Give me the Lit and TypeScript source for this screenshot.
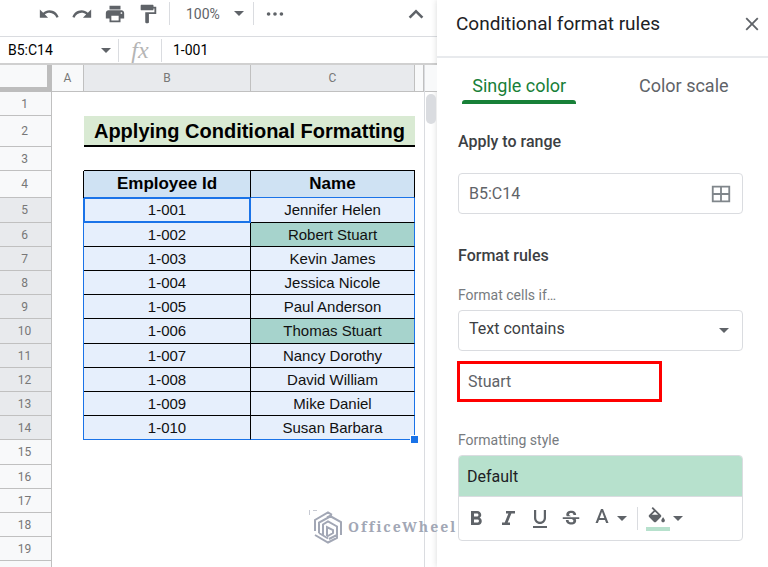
import { LitElement, html, css, svg } from "lit";
import { customElement, state } from "lit/decorators.js";
import { classMap } from "lit/directives/class-map.js";

const icon = (d: string, size = 24) => html`<svg class="icon" width=${size} height=${size} viewBox="0 0 24 24" aria-hidden="true">${svg`<path d=${d} />`}</svg>`;
const caret = html`<svg class="icon" width="10" height="5" viewBox="0 0 10 5" aria-hidden="true"><path d="M0 0h10L5 5z" /></svg>`;

const ICONS = {
  undo: "M12.5 8c-2.65 0-5.05.99-6.9 2.6L2 7v9h9l-3.62-3.62c1.39-1.16 3.16-1.88 5.12-1.88 3.54 0 6.55 2.31 7.6 5.5l2.37-.78C21.08 11.03 17.15 8 12.5 8z",
  redo: "M18.4 10.6C16.55 8.99 14.15 8 11.5 8c-4.65 0-8.58 3.03-9.96 7.22L3.9 16c1.05-3.19 4.05-5.5 7.6-5.5 1.95 0 3.73.72 5.12 1.88L13 16h9V7l-3.6 3.6z",
  print: "M19 8H5c-1.66 0-3 1.34-3 3v6h4v4h12v-4h4v-6c0-1.66-1.34-3-3-3zm-3 11H8v-5h8v5zm3-7c-.55 0-1-.45-1-1s.45-1 1-1 1 .45 1 1-.45 1-1 1zm-1-9H6v4h12V3z",
  paint: "M18 4V3c0-.55-.45-1-1-1H5c-.55 0-1 .45-1 1v4c0 .55.45 1 1 1h12c.55 0 1-.45 1-1V6h1v4H9v11c0 .55.45 1 1 1h2c.55 0 1-.45 1-1v-9h8V4h-3z",
  more: "M5 10a2 2 0 1 0 0 4 2 2 0 0 0 0-4zm7 0a2 2 0 1 0 0 4 2 2 0 0 0 0-4zm7 0a2 2 0 1 0 0 4 2 2 0 0 0 0-4z",
  up: "M12 7l-8 8 2 2 6-6 6 6 2-2z",
  close: "M19 6.4L17.6 5 12 10.6 6.4 5 5 6.4 10.6 12 5 17.6 6.4 19 12 13.4 17.6 19 19 17.6 13.4 12z",
  grid: "M2 3v18h20V3H2zm9 16H4v-6h7v6zm0-8H4V5h7v6zm9 8h-7v-6h7v6zm0-8h-7V5h7v6z",
  bold: "M15.6 10.79c.97-.67 1.65-1.77 1.65-2.79 0-2.26-1.75-4-4-4H7v14h7.04c2.09 0 3.71-1.7 3.71-3.79 0-1.52-.86-2.82-2.15-3.42zM10 6.5h3c.83 0 1.5.67 1.5 1.5s-.67 1.5-1.5 1.5h-3v-3zm3.5 9H10v-3h3.5c.83 0 1.5.67 1.5 1.5s-.67 1.5-1.5 1.5z",
  italic: "M10 4v2.500h2.400L8.700 15.500H6V18h8v-2.500h-2.300L15.400 6.500H19V4z",
  underline: "M12 17c3.31 0 6-2.69 6-6V3h-2.200v8c0 2.100-1.700 3.800-3.800 3.800S8.200 13.100 8.200 11V3H6v8c0 3.310 2.690 6 6 6zm-7 2v2h14v-2H5z",
  strike: "M7.24 8.75c-.26-.48-.39-1.03-.39-1.67 0-.61.13-1.16.4-1.67.26-.5.63-.93 1.11-1.29.48-.35 1.05-.63 1.7-.83.66-.19 1.39-.29 2.18-.29.81 0 1.54.11 2.21.34.66.22 1.23.54 1.69.94.47.4.83.88 1.08 1.43.25.55.38 1.15.38 1.81h-3.01c0-.31-.05-.59-.15-.85-.09-.27-.24-.49-.44-.68-.2-.19-.45-.33-.75-.44-.3-.1-.66-.16-1.06-.16-.39 0-.74.04-1.03.13-.29.09-.53.21-.72.36-.19.16-.34.34-.44.55-.1.21-.15.43-.15.66 0 .48.25.88.74 1.21.38.25.77.48 1.41.7H7.39c-.05-.08-.11-.17-.15-.25zM21 12v-2H3v2h9.62c.18.07.4.14.55.2.37.17.66.34.87.51.21.17.35.36.43.57.07.2.11.43.11.69 0 .23-.05.45-.14.66-.09.2-.23.38-.42.53-.19.15-.42.26-.71.35-.29.08-.63.13-1.01.13-.43 0-.83-.04-1.18-.13s-.66-.23-.91-.42c-.25-.19-.45-.44-.59-.75-.14-.31-.25-.76-.25-1.21H6.4c0 .55.08 1.13.24 1.58.16.45.37.85.65 1.21.28.35.6.66.98.92.37.26.78.48 1.22.65.44.17.9.3 1.38.39.48.08.96.13 1.44.13.8 0 1.53-.09 2.18-.28s1.21-.45 1.67-.79c.46-.34.82-.77 1.07-1.27s.38-1.07.38-1.71c0-.6-.1-1.14-.31-1.61-.05-.11-.11-.23-.17-.33H21z",
  color: "M11 2L5.500 16h2.400l1.100-3h6l1.100 3h2.400L13 2h-2zm-1.300 9L12 4.700 14.300 11H9.700z",
};

const PEOPLE = [
  ["1-001", "Jennifer Helen"],
  ["1-002", "Robert Stuart"],
  ["1-003", "Kevin James"],
  ["1-004", "Jessica Nicole"],
  ["1-005", "Paul Anderson"],
  ["1-006", "Thomas Stuart"],
  ["1-007", "Nancy Dorothy"],
  ["1-008", "David William"],
  ["1-009", "Mike Daniel"],
  ["1-010", "Susan Barbara"],
];

@customElement("sheet-grid")
class SheetGrid extends LitElement {
  static properties = { match: { type: String } };
  declare match: string;

  static styles = css`
    :host { display: flex; flex: 1; min-height: 0; overflow: hidden; position: relative; }
    .sheet { flex: 1; min-width: 0; display: flex; flex-direction: column; }
    .gutter { flex: 1; width: 52px; box-sizing: border-box; background: #f8f9fa; border-right: 1px solid #c0c0c0; }
    table { width: 100%; table-layout: fixed; border-collapse: separate; border-spacing: 0; font-family: "Liberation Sans", Arial, sans-serif; color: #000; }
    .c-num { width: 52px; }
    .c-a { width: 32px; }
    .c-b { width: 167px; }
    .c-c { width: 164px; }
    th, td { box-sizing: border-box; padding: 0; text-align: center; vertical-align: middle; white-space: nowrap; line-height: 20px; }
    thead th { height: 27px; background: #f8f9fa; border-right: 1px solid #c0c0c0; border-bottom: 1px solid #c0c0c0; color: #777; font: 400 12px/20px Roboto, sans-serif; }
    thead .corner { border-right: 5px solid #bdbdbd; border-bottom: 5px solid #bdbdbd; }
    .num { background: #f8f9fa; border-right: 1px solid #c0c0c0; border-bottom: 1px solid #c0c0c0; color: #777; font: 400 12px/20px Roboto, sans-serif; padding-right: 2px; }
    thead .picked, .num.picked { background: #e8eaed; }
    tbody tr { height: 24px; }
    tbody tr:nth-child(5n) { height: 25px; }
    tbody .title-row { height: 31px; }
    tbody .head-row { height: 27px; }
    .title { background: #d9ead3; border-bottom: 2px solid #000; font-size: 20px; font-weight: 700; }
    .rule-above { border-bottom: 1px solid #000; }
    .edge { border-right: 1px solid #000; }
    .head { background: #cfe2f3; border-right: 1px solid #000; border-bottom: 1px solid #1a73e8; font-size: 17px; font-weight: 700; }
    .edge-sel { border-right: 1px solid #1a73e8; }
    .cell { background: #e6effc; border-right: 1px solid #000; border-bottom: 1px solid #000; font-size: 15px; color: #111; }
    .last { border-right-color: #1a73e8; }
    .bottom { border-bottom-color: #1a73e8; }
    .hit { background: #a6d3cc; }
    .active { border-color: #1a73e8; box-shadow: inset 0 0 0 1px #1a73e8; }
    .anchor { position: relative; }
    .handle { position: absolute; right: -4px; bottom: -4px; width: 7px; height: 7px; background: #1a73e8; outline: 1px solid #fff; }
    .scroll { width: 13px; box-sizing: border-box; border-left: 1px solid #dadce0; }
    .scroll-head { height: 26px; background: #f8f9fa; border-bottom: 1px solid #c0c0c0; }
    .thumb { height: 30px; margin: 2px 1px; border-radius: 5px; background: #dadce0; }
  `;

  private row(n: number) {
    const picked = n >= 5 && n <= 14;
    const num = html`<th scope="row" class=${classMap({ num: true, picked })}>${n}</th>`;
    if (n === 2) return html`<tr class="title-row">${num}<td></td><td class="title" colspan="2">Applying Conditional Formatting</td><td></td></tr>`;
    if (n === 3) return html`<tr>${num}<td></td><td class="rule-above"></td><td class="rule-above"></td><td></td></tr>`;
    if (n === 4) return html`<tr class="head-row">${num}<td class="edge"></td><td class="head">Employee Id</td><td class="head">Name</td><td></td></tr>`;
    if (!picked) return html`<tr>${num}<td></td><td></td><td></td><td></td></tr>`;
    const [id, name] = PEOPLE[n - 5];
    const bottom = n === 14;
    return html`<tr>
      ${num}
      <td class="edge-sel"></td>
      <td class=${classMap({ cell: true, bottom, active: n === 5 })}>${id}</td>
      <td class=${classMap({ cell: true, last: true, bottom, anchor: bottom, hit: name.includes(this.match) })}>
        ${name}${bottom ? html`<span class="handle"></span>` : null}
      </td>
      <td></td>
    </tr>`;
  }

  render() {
    return html`
      <div class="sheet">
        <table>
          <colgroup><col class="c-num" /><col class="c-a" /><col class="c-b" /><col class="c-c" /><col /></colgroup>
          <thead>
            <tr><th class="corner"></th><th>A</th><th class="picked">B</th><th class="picked">C</th><th></th></tr>
          </thead>
          <tbody>${Array.from({ length: 19 }, (_, i) => this.row(i + 1))}</tbody>
        </table>
        <div class="gutter"></div>
      </div>
      <div class="scroll"><div class="scroll-head"></div><div class="thumb"></div></div>
    `;
  }
}

@customElement("rules-panel")
class RulesPanel extends LitElement {
  static properties = { match: { type: String } };
  declare match: string;

  static styles = css`
    :host { display: block; width: 331px; flex: none; box-sizing: border-box; background: #fff; font-family: Roboto, sans-serif; color: #3c4043; box-shadow: 0 0 6px rgba(60, 64, 67, 0.2); }
    button, input, select { font: inherit; color: inherit; margin: 0; }
    button { display: flex; align-items: center; justify-content: center; padding: 0; border: 0; background: none; color: #5f6368; }
    .icon { display: block; fill: currentColor; }
    header { display: flex; align-items: center; justify-content: space-between; height: 58px; padding: 0 5px 8px 19px; box-sizing: border-box; border-bottom: 2px solid #e8eaed; }
    h2 { margin: 0; font-size: 19px; line-height: 24px; font-weight: 400; color: #202124; }
    .tabs { display: grid; grid-template-columns: 1fr 1fr; padding-top: 16px; padding-right: 2px; justify-items: center; }
    .tab { flex-direction: column; font-size: 18px; line-height: 24px; }
    .tab::after { content: ""; width: 114px; height: 4px; margin-top: 2px; border-radius: 3px 3px 0 0; }
    .tab.on { color: #188038; }
    .tab.on::after { background: #188038; }
    .body { display: flex; flex-direction: column; padding: 26px 25px 24px 21px; }
    h3 { margin: 0; font-size: 16px; line-height: 24px; font-weight: 500; }
    .small { font-size: 14px; line-height: 20px; color: #777b80; }
    .box { display: flex; align-items: center; height: 41px; box-sizing: border-box; border: 1px solid #dadce0; border-radius: 4px; padding: 0 10px; font-size: 16px; }
    .box input { flex: 1; min-width: 0; border: 0; outline: 0; padding: 0; background: none; }
    .box .icon { color: #80868b; }
    .box.range { margin: 19px 0 30px; color: #5f6368; }
    .fmt { margin-top: 17px; }
    .pick { position: relative; margin-top: 5px; }
    .pick select { display: block; width: 100%; padding: 0 10px 4px; height: 41px; border: 1px solid #dadce0; border-radius: 4px; background: none; appearance: none; font-size: 16px; box-sizing: border-box; }
    .pick .icon { position: absolute; right: 14px; top: 18px; pointer-events: none; color: #5f6368; }
    .term { width: 203px; height: 39px; box-sizing: border-box; margin-top: 11px; padding: 0 8px; border: 2px solid #f00; outline: 1px solid #f00; font-size: 16px; color: #5f6368; background: none; }
    .style-label { margin-top: 29px; }
    .style { margin-top: 5px; border: 1px solid #dadce0; border-radius: 4px; overflow: hidden; background: #fff; }
    .preview { width: 100%; height: 41px; justify-content: flex-start; padding: 0 8px; background: #b7e1cd; color: #202124; border-bottom: 1px solid #dadce0; font-size: 16px; }
    .tools { display: flex; align-items: center; height: 43px; padding: 0 5px; gap: 8px; }
    .tools .with-caret { gap: 3px; }
    .bar { width: 1px; height: 23px; background: #dadce0; margin-left: 2px; }
  `;

  render() {
    return html`
      <header><h2>Conditional format rules</h2><button aria-label="Close">${icon(ICONS.close, 22)}</button></header>
      <div class="tabs" role="tablist">
        <button class="tab on" role="tab" aria-selected="true">Single color</button>
        <button class="tab" role="tab" aria-selected="false">Color scale</button>
      </div>
      <div class="body">
        <h3 id="range">Apply to range</h3>
        <div class="box range"><input aria-labelledby="range" .value=${"B5:C14"} /><button aria-label="Select data range">${icon(ICONS.grid, 22)}</button></div>
        <h3>Format rules</h3>
        <label class="small fmt" for="cond">Format cells if…</label>
        <div class="pick"><select id="cond"><option>Text contains</option></select>${caret}</div>
        <input class="term" aria-label="Value" .value=${this.match} />
        <div class="small style-label">Formatting style</div>
        <div class="style">
          <button class="preview">Default</button>
          <div class="tools">
            <button aria-label="Bold">${icon(ICONS.bold)}</button>
            <button aria-label="Italic">${icon(ICONS.italic)}</button>
            <button aria-label="Underline">${icon(ICONS.underline)}</button>
            <button aria-label="Strikethrough">${icon(ICONS.strike, 22)}</button>
            <button class="with-caret" aria-label="Text color">${icon(ICONS.color)}${caret}</button>
            <span class="bar"></span>
            <button class="with-caret" aria-label="Fill color">
              <svg class="icon" width="24" height="24" viewBox="0 0 24 24" aria-hidden="true">
                <path transform="scale(.9)" d="M16.560 8.940L7.620 0 6.210 1.410l2.380 2.380-5.150 5.150c-.59.59-.59 1.540 0 2.120l5.500 5.500c.29.29.68.44 1.060.44s.77-.15 1.060-.44l5.500-5.500c.59-.58.59-1.530 0-2.120zM6.500 8.700L10 5.210 13.500 8.700H6.500zM19 11.500s-2 2.170-2 3.500c0 1.100.9 2 2 2s2-.9 2-2c0-1.330-2-3.500-2-3.500z" />
                <path fill="#b7e1cd" d="M0 20h24v4H0z" />
              </svg>${caret}
            </button>
          </div>
        </div>
      </div>
    `;
  }
}

@customElement("app-root")
class AppRoot extends LitElement {
  @state() private match = "Stuart";

  static styles = css`
    :host { display: flex; height: 100vh; overflow: hidden; position: relative; background: #fff; font-family: Roboto, sans-serif; }
    .icon { display: block; fill: currentColor; color: #5f6368; }
    .sheet { flex: 1; min-width: 0; display: flex; flex-direction: column; }
    .toolbar { display: flex; align-items: center; height: 37px; box-sizing: border-box; padding: 0 9px 9px 37px; gap: 9px; border-bottom: 1px solid #dadce0; color: #5f6368; }
    button { display: flex; align-items: center; justify-content: center; min-width: 24px; padding: 0; border: 0; background: none; color: #5f6368; font: inherit; font-size: 14px; line-height: 20px; }
    .zoom { gap: 14px; padding: 0 0 0 7px; }
    .sep { width: 1px; height: 23px; background: #dadce0; }
    .push { margin-left: auto; }
    .formula { display: flex; align-items: center; height: 28px; box-sizing: border-box; border-bottom: 2px solid #d0d0d0; font-size: 14px; color: #000; }
    .formula input { border: 0; outline: 0; padding: 0; min-width: 0; font: inherit; color: inherit; background: none; }
    .formula .name { width: 93px; padding-left: 8px; }
    .formula .sep { margin: 0 7px; }
    .fx { font: italic 24px/24px "Liberation Serif", serif; color: #b5b5b5; width: 28px; text-align: center; }
    .formula .value { flex: 1; padding-left: 4px; }
    .mark { position: absolute; left: 308px; bottom: 22px; display: flex; align-items: center; gap: 4px; color: #a2a7b5; font: 700 14px/20px "Noto Serif", "DejaVu Serif", serif; letter-spacing: 2px; pointer-events: none; }
    .mark svg { fill: none; stroke: currentColor; stroke-width: 2; }
  `;

  render() {
    return html`
      <main class="sheet">
        <div class="toolbar">
          <button aria-label="Undo">${icon(ICONS.undo, 22)}</button>
          <button aria-label="Redo">${icon(ICONS.redo, 22)}</button>
          <button aria-label="Print">${icon(ICONS.print, 22)}</button>
          <button aria-label="Paint format">${icon(ICONS.paint, 22)}</button>
          <span class="sep"></span>
          <button class="zoom">100% ${caret}</button>
          <span class="sep"></span>
          <button aria-label="More">${icon(ICONS.more, 22)}</button>
          <button class="push" aria-label="Hide the menus">${icon(ICONS.up, 22)}</button>
        </div>
        <div class="formula">
          <input class="name" aria-label="Name box" .value=${"B5:C14"} />
          ${caret}
          <span class="sep"></span><span class="fx">fx</span><span class="sep"></span>
          <input class="value" aria-label="Formula" .value=${"1-001"} />
        </div>
        <sheet-grid .match=${this.match}></sheet-grid>
      </main>
      <rules-panel .match=${this.match}></rules-panel>
      <div class="mark">
        <svg width="36" height="36" viewBox="0 0 36 36" aria-hidden="true">
          <path stroke-width="1" opacity=".6" d="M1.500 1v5M5 1.500h4" />
          <path d="M7 22V11L20 3.500l4 2.300M11 24V13.500L24 6.500M19 8.500l3-1.500L33 13v13M15 26V15.500l5-3 9 5v8.500l-8 4M19 27V18l6 3v3l-6 3.500M7 26l13 7.500L29 29v-4M11 24l9 5.500" />
        </svg>
        <span>OfficeWheel</span>
      </div>
    `;
  }
}
